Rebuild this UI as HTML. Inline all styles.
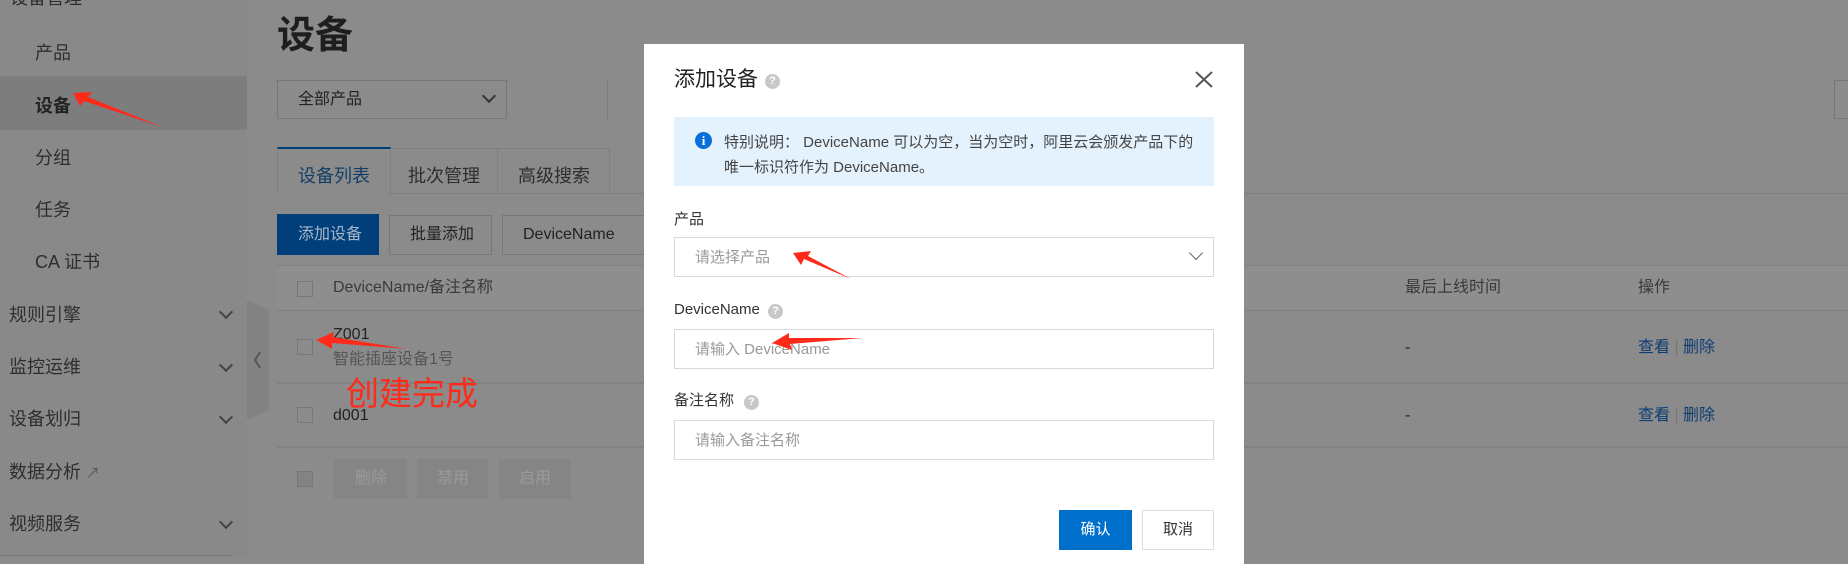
<!DOCTYPE html>
<html><head><meta charset="utf-8"><style>
*{margin:0;padding:0;box-sizing:border-box}
body{width:1848px;height:557px;overflow:hidden;background:#8b8b8b;font-family:"Liberation Sans","Noto Sans CJK SC",sans-serif;position:relative;color:#2b2b2b}
.a{position:absolute;white-space:nowrap}
.sb{left:0;top:0;width:247px;height:557px;background:#898989}
.si{font-size:18px;color:#2e2e2e;line-height:20px}
.chev{width:10px;height:10px;border-right:2px solid #444;border-bottom:2px solid #444;transform:rotate(45deg)}
.box{border:1px solid #777;}
.t16{font-size:16px;line-height:18px}
.ln{height:2px;background:#828282}
.m{left:644px;top:44px;width:600px;height:520px;background:#fff}
.inp{border:1px solid #d9d9d9;background:#fff}
.ph{font-size:15px;color:#999;line-height:18px}
.lb{font-size:15px;color:#333;line-height:18px}
.q{width:15px;height:15px;border-radius:50%;background:#c8c8c8;color:#fff;font-size:11px;line-height:15px;text-align:center;font-weight:bold}
</style></head><body>
<div class="a sb"></div>
<div class="a" style="left:0;top:76px;width:247px;height:54px;background:#7d7d7d"></div>
<div class="a si" style="left:10px;top:-12px">设备管理</div>
<div class="a si" style="left:35px;top:43px">产品</div>
<div class="a si" style="left:35px;top:96px;font-weight:bold;color:#222">设备</div>
<div class="a si" style="left:35px;top:148px">分组</div>
<div class="a si" style="left:35px;top:200px">任务</div>
<div class="a si" style="left:35px;top:252px">CA 证书</div>
<div class="a si" style="left:9px;top:305px">规则引擎</div>
<div class="a si" style="left:9px;top:357px">监控运维</div>
<div class="a si" style="left:9px;top:409px">设备划归</div>
<div class="a si" style="left:9px;top:462px">数据分析 <span style="font-size:14px;color:#555">↗</span></div>
<div class="a si" style="left:9px;top:514px">视频服务</div>
<div class="a chev" style="left:221px;top:307px"></div>
<div class="a chev" style="left:221px;top:360px"></div>
<div class="a chev" style="left:221px;top:412px"></div>
<div class="a chev" style="left:221px;top:517px"></div>
<div class="a" style="left:0;top:555px;width:233px;height:1px;background:#7a7a7a"></div>
<svg class="a" style="left:247px;top:300px" width="24" height="120"><polygon points="0,0 22,10 22,110 0,120" fill="#828282"/><polyline points="13,52 8,60 13,68" fill="none" stroke="#555" stroke-width="2"/></svg>

<div class="a" style="left:277px;top:14px;font-size:38px;font-weight:bold;color:#1e1e1e;line-height:44px">设备</div>
<div class="a box" style="left:277px;top:80px;width:230px;height:39px"></div>
<div class="a t16" style="left:298px;top:91px;color:#222">全部产品</div>
<div class="a chev" style="left:484px;top:91px;border-color:#333"></div>
<div class="a" style="left:607px;top:80px;width:1px;height:40px;background:#7e7e7e"></div>
<div class="a" style="left:1834px;top:80px;width:14px;height:39px;border:1px solid #777;border-right:none"></div>

<div class="a" style="left:277px;top:193px;width:1571px;height:1px;background:#7f7f7f"></div>
<div class="a" style="left:277px;top:147px;width:114px;height:48px;background:#8b8b8b;border:1px solid #7f7f7f;border-top:2px solid #003f7a;border-bottom:none"></div>
<div class="a" style="left:391px;top:148px;width:107px;height:46px;border:1px solid #7f7f7f;border-left:none"></div>
<div class="a" style="left:498px;top:148px;width:112px;height:46px;border:1px solid #7f7f7f;border-left:none"></div>
<div class="a" style="left:298px;top:162px;font-size:18px;color:#143e68">设备列表</div>
<div class="a" style="left:408px;top:162px;font-size:18px;color:#2e2e2e">批次管理</div>
<div class="a" style="left:518px;top:162px;font-size:18px;color:#2e2e2e">高级搜索</div>

<div class="a" style="left:277px;top:214px;width:102px;height:41px;background:#003f7a"></div>
<div class="a t16" style="left:298px;top:226px;color:#a8b8c8">添加设备</div>
<div class="a box" style="left:389px;top:215px;width:103px;height:40px"></div>
<div class="a t16" style="left:410px;top:226px;color:#222">批量添加</div>
<div class="a box" style="left:502px;top:215px;width:150px;height:40px"></div>
<div class="a t16" style="left:523px;top:226px;color:#222">DeviceName</div>

<div class="a" style="left:277px;top:265px;width:1571px;height:46px;background:#8e8e8e;border-top:1px solid #838383;border-bottom:1px solid #828282"></div>
<div class="a" style="left:297px;top:281px;width:16px;height:16px;border:1px solid #777"></div>
<div class="a t16" style="left:333px;top:279px;color:#3a3a3a">DeviceName/备注名称</div>
<div class="a t16" style="left:1405px;top:279px;color:#3a3a3a">最后上线时间</div>
<div class="a t16" style="left:1638px;top:279px;color:#3a3a3a">操作</div>

<div class="a" style="left:297px;top:339px;width:16px;height:16px;border:1px solid #777"></div>
<div class="a t16" style="left:333px;top:326px;color:#222">Z001</div>
<div class="a t16" style="left:333px;top:351px;color:#555">智能插座设备1号</div>
<div class="a t16" style="left:1405px;top:339px;color:#222">-</div>
<div class="a t16" style="left:1638px;top:339px;color:#0d3d73">查看 <span style="color:#777">|</span> 删除</div>
<div class="a ln" style="left:277px;top:382px;width:1571px"></div>
<div class="a" style="left:297px;top:407px;width:16px;height:16px;border:1px solid #777"></div>
<div class="a t16" style="left:333px;top:407px;color:#222">d001</div>
<div class="a t16" style="left:1405px;top:407px;color:#222">-</div>
<div class="a t16" style="left:1638px;top:407px;color:#0d3d73">查看 <span style="color:#777">|</span> 删除</div>
<div class="a ln" style="left:277px;top:446px;width:1571px"></div>
<div class="a" style="left:297px;top:471px;width:16px;height:16px;border:1px solid #777;background:#838383"></div>
<div class="a" style="left:334px;top:459px;width:73px;height:40px;background:#858585"></div>
<div class="a" style="left:417px;top:459px;width:71px;height:40px;background:#858585"></div>
<div class="a" style="left:499px;top:459px;width:72px;height:40px;background:#858585"></div>
<div class="a t16" style="left:355px;top:470px;color:#9a9a9a">删除</div>
<div class="a t16" style="left:437px;top:470px;color:#9a9a9a">禁用</div>
<div class="a t16" style="left:519px;top:470px;color:#9a9a9a">启用</div>
<div class="a" style="left:346px;top:374px;font-size:33px;color:#ff2a1a;line-height:40px">创建完成</div>

<div class="a m"></div>
<div class="a" style="left:674px;top:68px;font-size:21px;color:#222;line-height:24px">添加设备</div>
<div class="a q" style="left:765px;top:74px">?</div>
<svg class="a" style="left:1195px;top:71px" width="18" height="17"><path d="M1,1L17,16M17,1L1,16" stroke="#555" stroke-width="2"/></svg>
<div class="a" style="left:674px;top:117px;width:540px;height:69px;background:#e3f2fd"></div>
<div class="a" style="left:695px;top:132px;width:17px;height:17px;border-radius:50%;background:#0a6fd8;color:#fff;font-size:13px;font-weight:bold;text-align:center;line-height:17px;font-family:'Liberation Serif',serif">i</div>
<div class="a" style="left:724px;top:130px;font-size:15px;color:#444;line-height:25px">特别说明：&nbsp;DeviceName 可以为空，当为空时，阿里云会颁发产品下的<br>唯一标识符作为 DeviceName。</div>
<div class="a lb" style="left:674px;top:211px">产品</div>
<div class="a inp" style="left:674px;top:237px;width:540px;height:40px"></div>
<div class="a ph" style="left:695px;top:249px">请选择产品</div>
<div class="a chev" style="left:1191px;top:248px;border-color:#666;border-width:1.5px"></div>
<div class="a lb" style="left:674px;top:301px">DeviceName</div>
<div class="a q" style="left:768px;top:304px">?</div>
<div class="a inp" style="left:674px;top:329px;width:540px;height:40px"></div>
<div class="a ph" style="left:695px;top:341px">请输入 DeviceName</div>
<div class="a lb" style="left:674px;top:392px">备注名称</div>
<div class="a q" style="left:744px;top:395px">?</div>
<div class="a inp" style="left:674px;top:420px;width:540px;height:40px"></div>
<div class="a ph" style="left:695px;top:432px">请输入备注名称</div>
<div class="a" style="left:1059px;top:510px;width:73px;height:40px;background:#0070cc;color:#fff;font-size:15px;text-align:center;line-height:40px">确认</div>
<div class="a" style="left:1142px;top:510px;width:72px;height:40px;border:1px solid #ddd;color:#333;font-size:15px;text-align:center;line-height:38px">取消</div>

<svg class="a" style="left:0;top:0" width="1848" height="557">
<g fill="#ff2a1a">
<polygon points="73,93 92,92 88,97 162,127 84,101 80,106"/>
<polygon points="316,340 334,332 333,337 407,349 332,343 332,349"/>
<polygon points="793,253 811,251 808,256 851,279 804,259 801,265"/>
<polygon points="772,343 789,333 789,338 862,338 790,344 792,350"/>
</g></svg>
</body></html>
